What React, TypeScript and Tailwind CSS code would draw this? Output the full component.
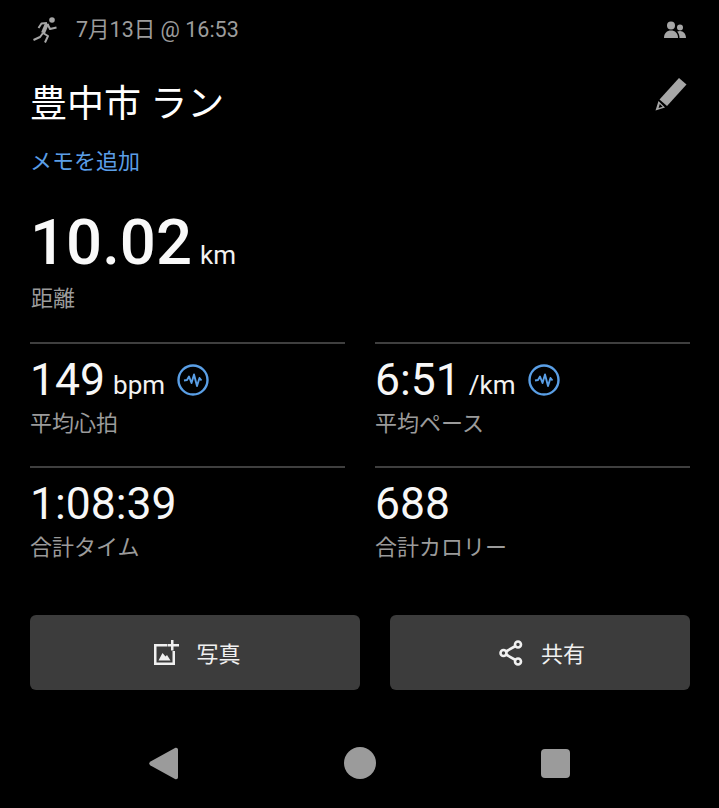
const CJK = "font-['Roboto','Noto_Sans_CJK_JP',sans-serif]";

function RunIcon() {
  return (
    <svg width="26" height="26" viewBox="0 0 26 26" fill="none" stroke="#a6a6a6" strokeWidth="2" strokeLinejoin="round">
      <circle cx="20" cy="3" r="2.8" fill="#a6a6a6" stroke="none" />
      <path d="M15 6.5 L11 16" strokeWidth="4" />
      <path d="M15 6 L9.5 6.5 L6.5 11" />
      <path d="M15.5 7 L18 12 L24.5 10.5" />
      <path d="M11 16 L8 20 L1.5 23" />
      <path d="M11 16 L16 19 L13 25.5" />
    </svg>
  );
}

function PulseIcon() {
  return (
    <svg width="32" height="32" viewBox="0 0 32 32" fill="none" stroke="#5a9fe6">
      <circle cx="16" cy="16" r="14.5" strokeWidth="2.4" />
      <path d="M7 16.5 L10 16 L12 12.5 L14.5 19 L17 10.5 L20 22 L22.5 14 L24.5 16.5" strokeWidth="1.9" strokeLinejoin="round" />
    </svg>
  );
}

function Stat(props: { value: string; unit?: string; label: string; pulse?: boolean }) {
  return (
    <div className="border-t-2 border-[#3f3f3f] pt-[9px] h-[124px]">
      <div className="flex items-center h-[54px]">
        <span className="text-[44.5px] leading-[54px] text-[#f7f7f7]">{props.value}</span>
        {props.unit ? <span className="text-[26px] text-[#f2f2f2] ml-[8px] mt-[10px]">{props.unit}</span> : null}
        {props.pulse ? <span className="ml-[12px]"><PulseIcon /></span> : null}
      </div>
      <div className="text-[22px] leading-[28px] text-[#9b9b9b] mt-[3px]">{props.label}</div>
    </div>
  );
}

export default function App() {
  return (
    <div className={`w-[719px] h-[808px] bg-black overflow-hidden ${CJK}`}>
      <div className="flex items-center justify-between h-[60px] pl-[32px] pr-[33px]">
        <div className="flex items-center">
          <RunIcon />
          <span className="ml-[18px] text-[21.5px] text-[#9c9c9c]">7月13日 @ 16:53</span>
        </div>
        <svg width="22" height="18" viewBox="0 0 22 18" fill="#a6a6a6">
          <circle cx="7" cy="4.5" r="4" />
          <path d="M0 17 C0 12 3 9.5 7 9.5 C11 9.5 14 12 14 17 Z" />
          <circle cx="16" cy="6.5" r="3" />
          <path d="M15.5 17 C15.5 14 14.5 12 13.2 10.5 C14 10.2 15 10 16 10 C19.5 10 22 13 22 17 Z" />
        </svg>
      </div>

      <div className="flex justify-between pl-[30px] pr-[32px] mt-[18px]">
        <div className="text-[37px] leading-[54px] text-white">豊中市 ラン</div>
        <svg width="32" height="34" viewBox="0 0 32 34" fill="#a6a6a6" className="-mt-[1px]">
          <path d="M24 1 L31.5 7.5 L12 29 L4.5 22.5 Z" />
          <path d="M3.5 24 L10 30.5 L0.5 33.5 Z M4.8 27 L3.6 31 L7.6 29.8 Z" fillRule="evenodd" />
        </svg>
      </div>

      <div className="pl-[30px] mt-[14px] text-[22px] leading-[32px] text-[#5b9ee6]">メモを追加</div>

      <div className="flex items-baseline pl-[30px] mt-[25px] h-[80px]">
        <span className="text-[63.5px] leading-[80px] font-medium text-[#f9f9f9]">10.02</span>
        <span className="text-[26px] text-[#f2f2f2] ml-[8px]">km</span>
      </div>
      <div className="pl-[31px] mt-[2px] text-[22px] leading-[28px] text-[#9b9b9b]">距離</div>

      <div className="grid grid-cols-[315px_315px] gap-x-[30px] pl-[30px] mt-[29px]">
        <Stat value="149" unit="bpm" label="平均心拍" pulse />
        <Stat value="6:51" unit="/km" label="平均ペース" pulse />
        <Stat value="1:08:39" label="合計タイム" />
        <Stat value="688" label="合計カロリー" />
      </div>

      <div className="flex gap-[30px] pl-[30px] mt-[25px]">
        <div className="flex items-center justify-center w-[330px] h-[75px] pl-[5px] rounded-[6px] bg-[#3c3c3c] text-[22px] text-[#f0f0f0]">
          <svg width="25" height="25" viewBox="0 0 25 25" fill="#f0f0f0" className="mr-[17px]">
            <path d="M0 4 H13 V6.5 H2.5 V22.5 H18.5 V11 H21 V25 H0 Z" />
            <path d="M17 0 H19.5 V4 H25 V6.5 H19.5 V10.5 H17 V6.5 H13.5 V4 H17 Z" />
            <path d="M4.5 20.5 L8.5 13 L11.5 16.5 L13 15 L16.5 20.5 Z" />
          </svg>
          <span className="mt-[3px]">写真</span>
        </div>
        <div className="flex items-center justify-center w-[300px] h-[75px] pl-[4px] rounded-[6px] bg-[#3c3c3c] text-[22px] text-[#f0f0f0]">
          <svg width="24" height="26" viewBox="0 0 24 26" fill="none" stroke="#f0f0f0" strokeWidth="2.6" className="mr-[18px]">
            <circle cx="19" cy="4.5" r="3" />
            <circle cx="4.5" cy="13" r="3" />
            <circle cx="19" cy="21.5" r="3" />
            <path d="M7 11.5 L16.5 6 M7 14.5 L16.5 20" />
          </svg>
          <span className="mt-[3px]">共有</span>
        </div>
      </div>

      <div className="flex items-center mt-[56px] pl-[149px] h-[34px]">
        <svg width="30" height="33" viewBox="0 0 30 33" fill="#9b9b9b">
          <path d="M1.5 14.5 L26 1 C27.5 0.3 29 1 29 3 L29 30 C29 32 27.5 32.7 26 32 L1.5 18.5 C-0.2 17.5 -0.2 15.5 1.5 14.5 Z" />
        </svg>
        <div className="w-[32px] h-[32px] rounded-full bg-[#9b9b9b] ml-[165px]" />
        <div className="w-[29px] h-[29px] rounded-[4px] bg-[#9b9b9b] ml-[165px]" />
      </div>
    </div>
  );
}
